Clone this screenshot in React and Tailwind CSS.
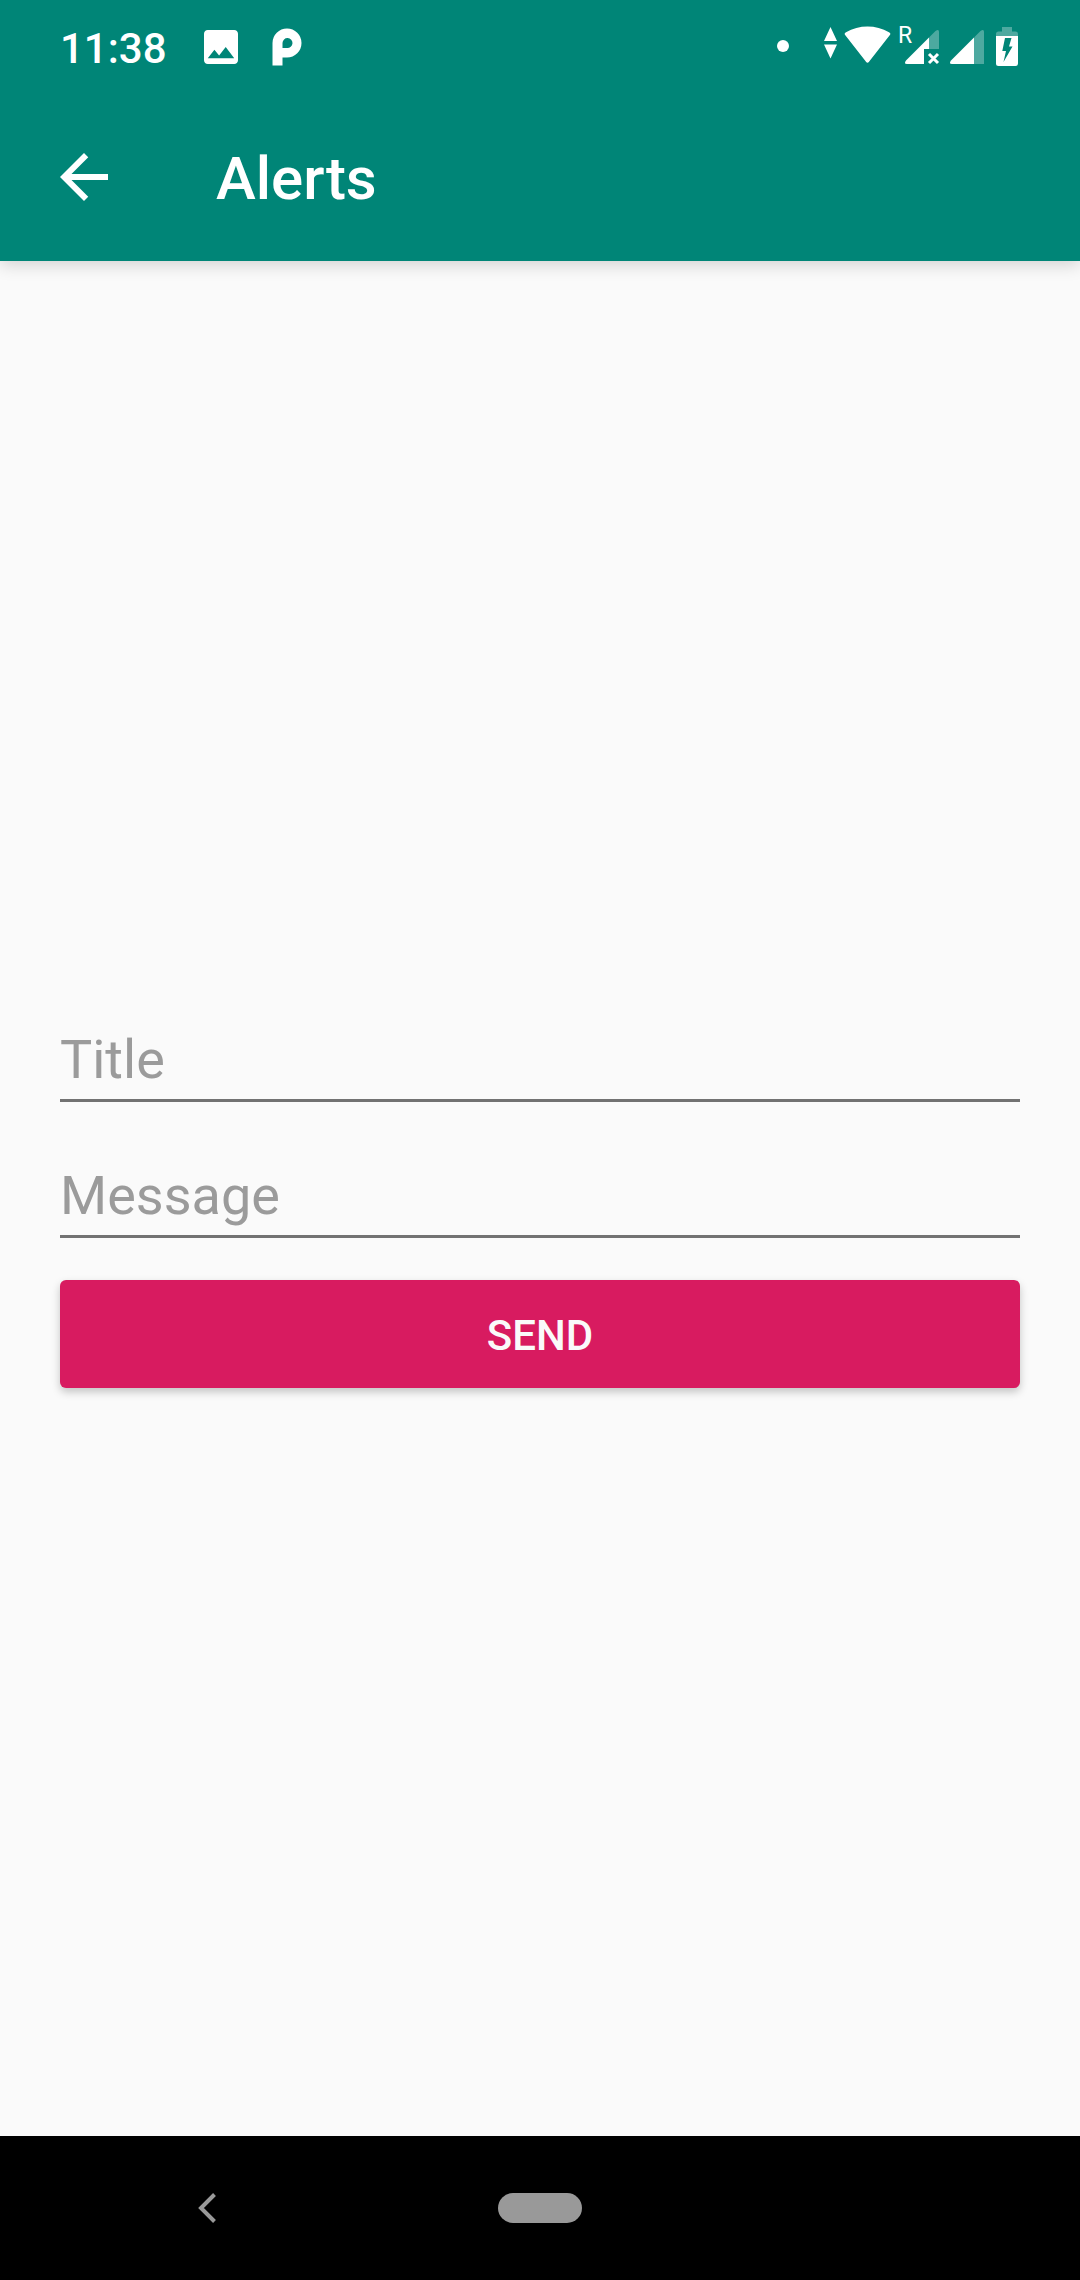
function StatusBar() {
  return (
    <div className="flex h-[93px] items-center justify-between px-[60px] text-white">
      <div className="flex items-center">
        <span className="w-36 pt-1 text-[42px] leading-[48px] font-medium whitespace-nowrap">11:38</span>
        <svg className="h-[34px] w-[34px]" viewBox="3 3 18 18" fill="currentColor" aria-hidden="true">
          <path d="M21 19V5c0-1.100-.9-2-2-2H5c-1.100 0-2 .9-2 2v14c0 1.100.9 2 2 2h14c1.100 0 2-.9 2-2zM8.500 13.500l2.500 3.010L14.500 12l4.500 6H5l3.500-4.500z" />
        </svg>
        <svg className="ml-[34px] h-[38px] w-[30px]" viewBox="0 0 30 38" fill="currentColor" aria-hidden="true">
          <path
            fillRule="evenodd"
            d="M.5 37.500V15A14.500 14.500 0 1 1 15 29.500H10.500V37.500ZM10.500 20V15A5 5 0 1 1 15 20Z"
          />
        </svg>
      </div>
      <svg className="h-14 w-[244px]" viewBox="776 19 244 56" fill="currentColor" role="img" aria-label="Network and battery status">
        <circle cx="783" cy="46" r="6" />
        <path d="M830.500 27L837 41H824ZM824 44.500H837L830.500 58.500Z" />
        <path d="M845.500 35.500Q843.500 33.500 846 32.200C859 24.700 876 24.700 889 32.200Q891.500 33.500 889.500 35.500L869 61.800Q867.500 63.500 866 61.800Z" />
        <text x="898" y="43" fontSize="23" fontFamily="Roboto, sans-serif">R</text>
        <path fillOpacity=".3" d="M929 37.500L935.500 31Q939 28.500 939 32V49H929Z" />
        <path d="M929 37.500V49H924V64H907Q903.500 64 906 60.500Z" />
        <path d="M929 54L938 63M938 54L929 63" stroke="currentColor" strokeWidth="3" />
        <path fillOpacity=".3" d="M974 37.500L980.500 31Q984 28.500 984 32V64H974Z" />
        <path d="M974 37.500V64H952Q948.500 64 951 60.500Z" />
        <path fillOpacity=".3" d="M996 36V34Q996 31.500 998.500 31.500H1002V27H1012V31.500H1015.500Q1018 31.500 1018 34V36Z" />
        <path fillRule="evenodd" d="M996 36H1018V63.500Q1018 66 1015.500 66H998.500Q996 66 996 63.500ZM1005 38L1002.300 51H1006L1003.500 62L1012.500 46.500H1009L1011.500 38Z" />
      </svg>
    </div>
  );
}

function AppBar() {
  return (
    <div className="flex h-[168px] items-center pl-12 text-white">
      <button type="button" aria-label="Back" className="mr-24">
        <svg className="h-[72px] w-[72px]" viewBox="0 0 24 24" fill="currentColor" aria-hidden="true">
          <path d="M20 11H7.830l5.590-5.590L12 4l-8 8 8 8 1.410-1.410L7.830 13H20v-2z" />
        </svg>
      </button>
      <h1 className="pt-1 text-[60px] leading-[72px] font-medium">Alerts</h1>
    </div>
  );
}

function Field({ label, name }) {
  return (
    <div className="pt-[62px]">
      <input
        type="text"
        name={name}
        aria-label={label}
        placeholder={label}
        className="block h-[74px] w-full border-b-[3px] border-[#727272] bg-transparent pb-2 text-[54px] text-neutral-800 outline-none placeholder:text-[#9b9b9b]"
      />
    </div>
  );
}

function NavigationBar() {
  return (
    <nav className="grid h-36 grid-cols-[1fr_auto_1fr] items-center bg-black text-[#999999]">
      <button type="button" aria-label="System back" className="ml-[198px] justify-self-start">
        <svg className="h-[30px] w-[18px]" viewBox="0 0 18 30" fill="none" stroke="currentColor" strokeWidth="4" aria-hidden="true">
          <path d="M16.500 1.500L3 15L16.500 28.500" />
        </svg>
      </button>
      <button type="button" aria-label="Home" className="h-[30px] w-[84px] rounded-full bg-[#999999]" />
    </nav>
  );
}

export default function App() {
  return (
    <div className="flex min-h-screen flex-col bg-[#fafafa] font-[Roboto,sans-serif]">
      <header className="bg-[#008577] shadow-[0_4px_16px_rgba(0,0,0,0.16)]">
        <StatusBar />
        <AppBar />
      </header>
      <main className="flex flex-1 flex-col justify-center px-[60px]">
        <form onSubmit={(event) => event.preventDefault()}>
          <Field label="Title" name="title" />
          <Field label="Message" name="message" />
          <button
            type="submit"
            className="mt-[42px] mb-11 block h-[108px] w-full rounded-md bg-[#d81b60] pt-1 text-[42px] font-medium text-[#fafafa] shadow-[0_4px_9px_rgba(0,0,0,0.22)]"
          >
            SEND
          </button>
        </form>
      </main>
      <NavigationBar />
    </div>
  );
}
